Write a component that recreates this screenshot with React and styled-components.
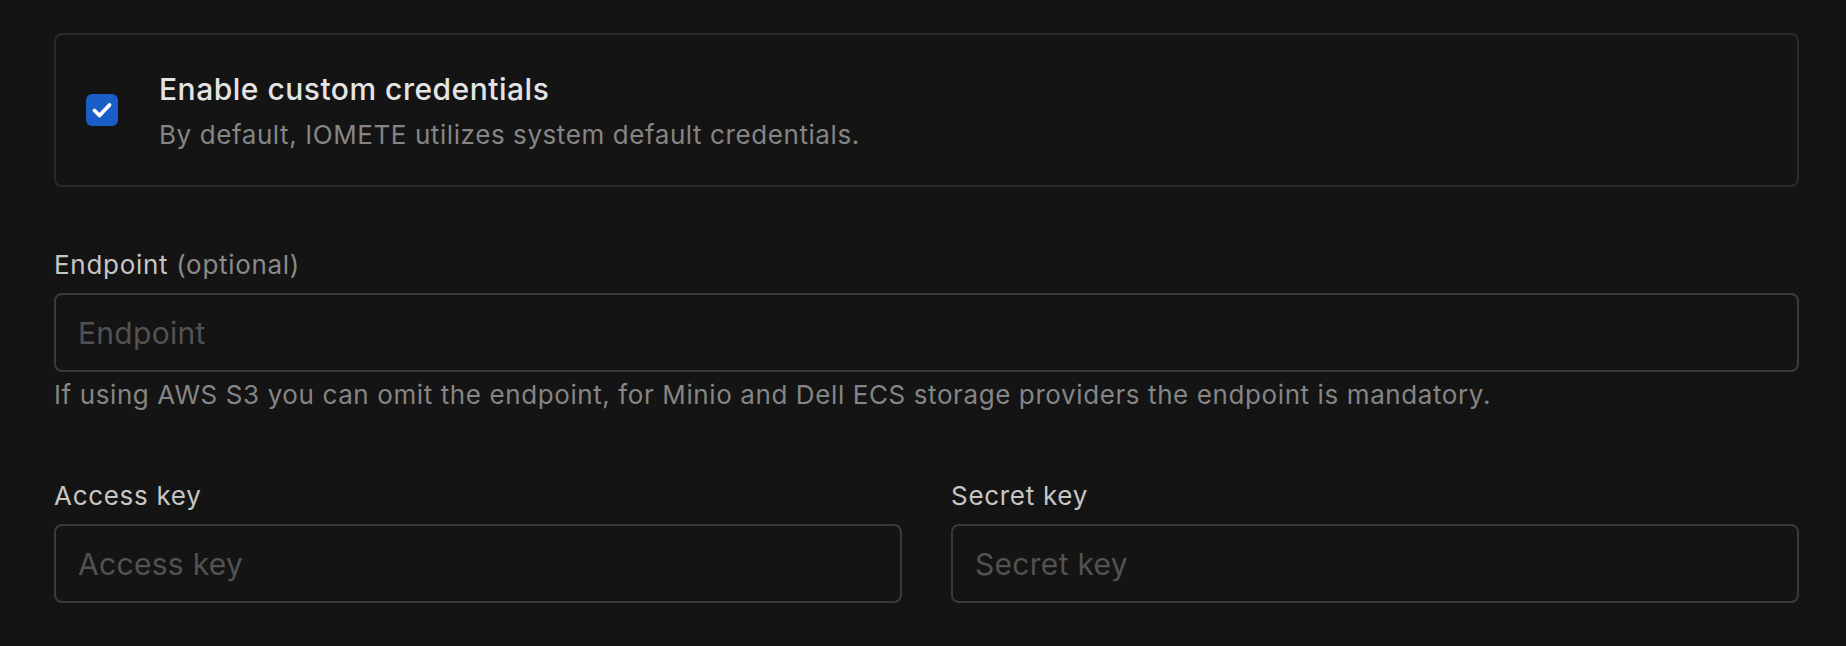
import React from "react";
import styled, { createGlobalStyle } from "styled-components";

const Global = createGlobalStyle`
  html, body {
    margin: 0;
    padding: 0;
    background: #141414;
  }
  body {
    font-family: Inter, "Noto Sans", sans-serif;
    -webkit-font-smoothing: antialiased;
  }
  * { box-sizing: border-box; }
`;

const Page = styled.div`
  padding: 33px 47px 0 54px;
  min-height: 646px;
  background: #141414;
`;

const Card = styled.div`
  height: 154px;
  border: 2px solid #2a2a2a;
  border-radius: 8px;
  display: flex;
  align-items: center;
  gap: 41px;
  padding: 0 30px;
`;

const CheckBox = styled.span`
  width: 32px;
  height: 32px;
  border-radius: 6px;
  background: #1a5ec8;
  display: flex;
  align-items: center;
  justify-content: center;
  flex: none;
`;

const CardText = styled.div`
  display: flex;
  flex-direction: column;
  gap: 4px;
  padding-top: 4px;
`;

const Title = styled.div`
  font-size: 30px;
  line-height: 42px;
  font-weight: 500;
  letter-spacing: 0.5px;
  color: #e4e4e4;
`;

const Subtitle = styled.div`
  font-size: 26px;
  line-height: 42px;
  letter-spacing: 0.58px;
  color: #858585;
`;

const Field = styled.div`
  display: flex;
  flex-direction: column;
  margin-top: ${(p) => p.$top || 0}px;
  min-width: 0;
`;

const Label = styled.label`
  font-size: 26px;
  line-height: 36px;
  letter-spacing: 0.7px;
  color: #c6c6c6;
  margin-bottom: 10px;
`;

const Optional = styled.span`
  color: #8a8a8a;
`;

const Input = styled.input`
  width: 100%;
  height: 79px;
  background: transparent;
  border: 2px solid #3a3a3a;
  border-radius: 8px;
  padding: 0 22px;
  font-family: Inter, "Noto Sans", sans-serif;
  font-size: 30px;
  letter-spacing: 0.3px;
  color: #e6e6e6;
  outline: none;
  &::placeholder {
    color: #525252;
  }
`;

const Helper = styled.div`
  font-size: 26px;
  line-height: 36px;
  letter-spacing: 0.6px;
  color: #858585;
  margin-top: 5px;
`;

const Row = styled.div`
  display: grid;
  grid-template-columns: 1fr 1fr;
  gap: 49px;
  margin-top: 65px;
`;

export default function App() {
  return (
    <>
      <Global />
      <Page>
        <Card>
          <CheckBox role="checkbox" aria-checked="true">
            <svg width="32" height="32" viewBox="0 0 32 32" fill="none">
              <path
                d="M8.5 16.5 L13.5 21.5 L23.5 11"
                stroke="#fff"
                strokeWidth="3.8"
                strokeLinecap="round"
                strokeLinejoin="round"
              />
            </svg>
          </CheckBox>
          <CardText>
            <Title>Enable custom credentials</Title>
            <Subtitle>By default, IOMETE utilizes system default credentials.</Subtitle>
          </CardText>
        </Card>

        <Field $top={60}>
          <Label>
            Endpoint <Optional>(optional)</Optional>
          </Label>
          <Input placeholder="Endpoint" />
          <Helper>
            If using AWS S3 you can omit the endpoint, for Minio and Dell ECS storage providers the endpoint is mandatory.
          </Helper>
        </Field>

        <Row>
          <Field>
            <Label>Access key</Label>
            <Input placeholder="Access key" />
          </Field>
          <Field>
            <Label>Secret key</Label>
            <Input placeholder="Secret key" />
          </Field>
        </Row>
      </Page>
    </>
  );
}
